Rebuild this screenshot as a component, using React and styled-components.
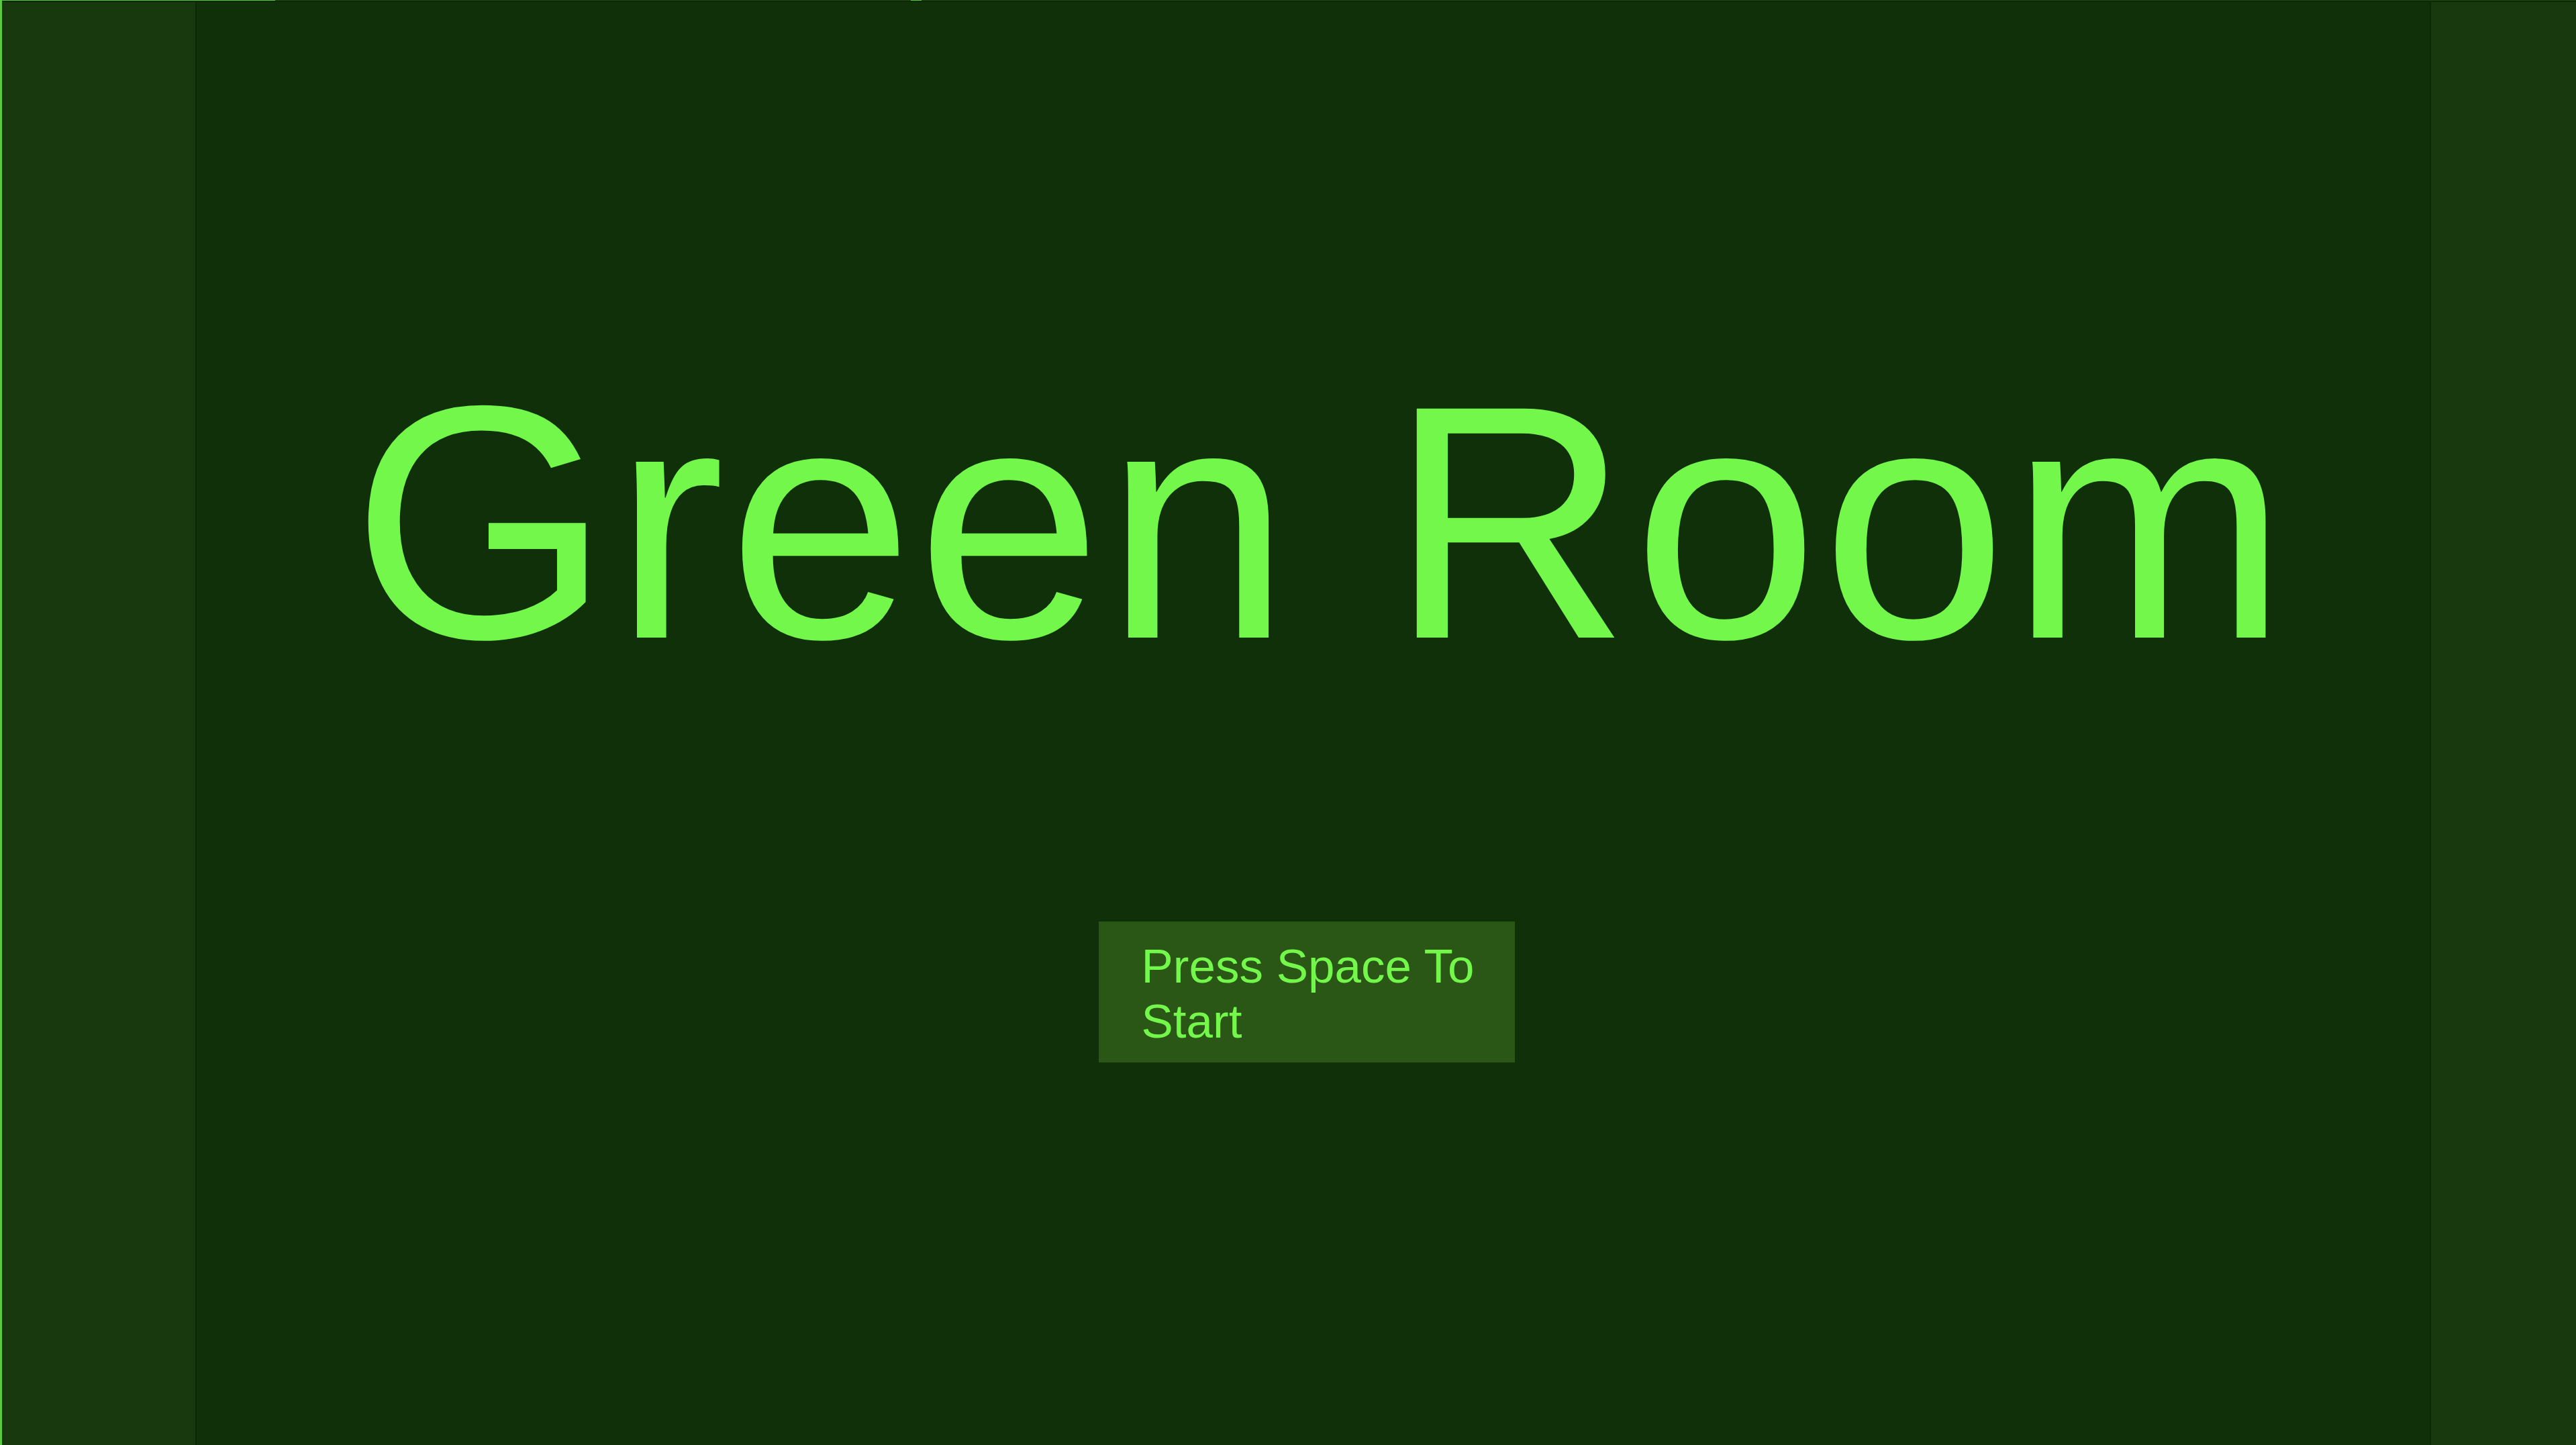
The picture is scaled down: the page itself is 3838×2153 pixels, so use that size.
import React from "react";
import styled, { createGlobalStyle } from "styled-components";

const color = {
  bright: "#74f74b",
  edge: "#5cc83f",
  strip: "#1f4713",
  main: "#10300a",
  side: "#18380d",
  seam: "#0c2807",
  button: "#2a5716",
};

const GlobalStyle = createGlobalStyle`
  html, body {
    margin: 0;
    padding: 0;
    background: ${color.main};
    overflow: hidden;
  }
  #root {
    height: 100vh;
  }
`;

const Page = styled.div`
  display: flex;
  flex-direction: column;
  height: 100vh;
  border-left: 3px solid ${color.edge};
  box-sizing: border-box;
  font-family: "Liberation Sans", Arial, sans-serif;
`;

const Strip = styled.div`
  display: flex;
  height: 1px;
  flex: none;
  background: ${color.strip};
`;

const Segment = styled.div`
  flex: none;
  width: ${(p) => p.$w}px;
  background: ${(p) => (p.$lit ? color.edge : "transparent")};
`;

const Frame = styled.div`
  flex: 1;
  display: flex;
  min-height: 0;
`;

const Side = styled.div`
  flex: none;
  width: ${(p) => p.$w}px;
  background: ${color.side};
  border-top: 2px solid ${color.seam};
  box-sizing: border-box;
`;

const Main = styled.main`
  flex: 1;
  display: flex;
  flex-direction: column;
  align-items: center;
  background: ${color.main};
  border-left: 2px solid ${color.seam};
  border-right: 2px solid ${color.seam};
  border-top: 2px solid ${color.seam};
`;

const Title = styled.h1`
  margin: 527px 0 0 24px;
  font-size: 496px;
  line-height: 1;
  font-weight: 400;
  letter-spacing: 5px;
  color: ${color.bright};
  white-space: nowrap;
`;

const StartButton = styled.div`
  margin: 347px 20px 0 0;
  width: 620px;
  box-sizing: border-box;
  padding: 26px 50px 20px 64px;
  background: ${color.button};
  color: ${color.bright};
  font-size: 71px;
  line-height: 82px;
`;

export default function App() {
  return (
    <>
      <GlobalStyle />
      <Page>
        <Strip>
          <Segment $w={407} $lit />
          <Segment $w={947} />
          <Segment $w={16} $lit />
        </Strip>
        <Frame>
          <Side $w={288} />
          <Main>
            <Title>Green Room</Title>
            <StartButton>Press Space To Start</StartButton>
          </Main>
          <Side $w={216} />
        </Frame>
      </Page>
    </>
  );
}
